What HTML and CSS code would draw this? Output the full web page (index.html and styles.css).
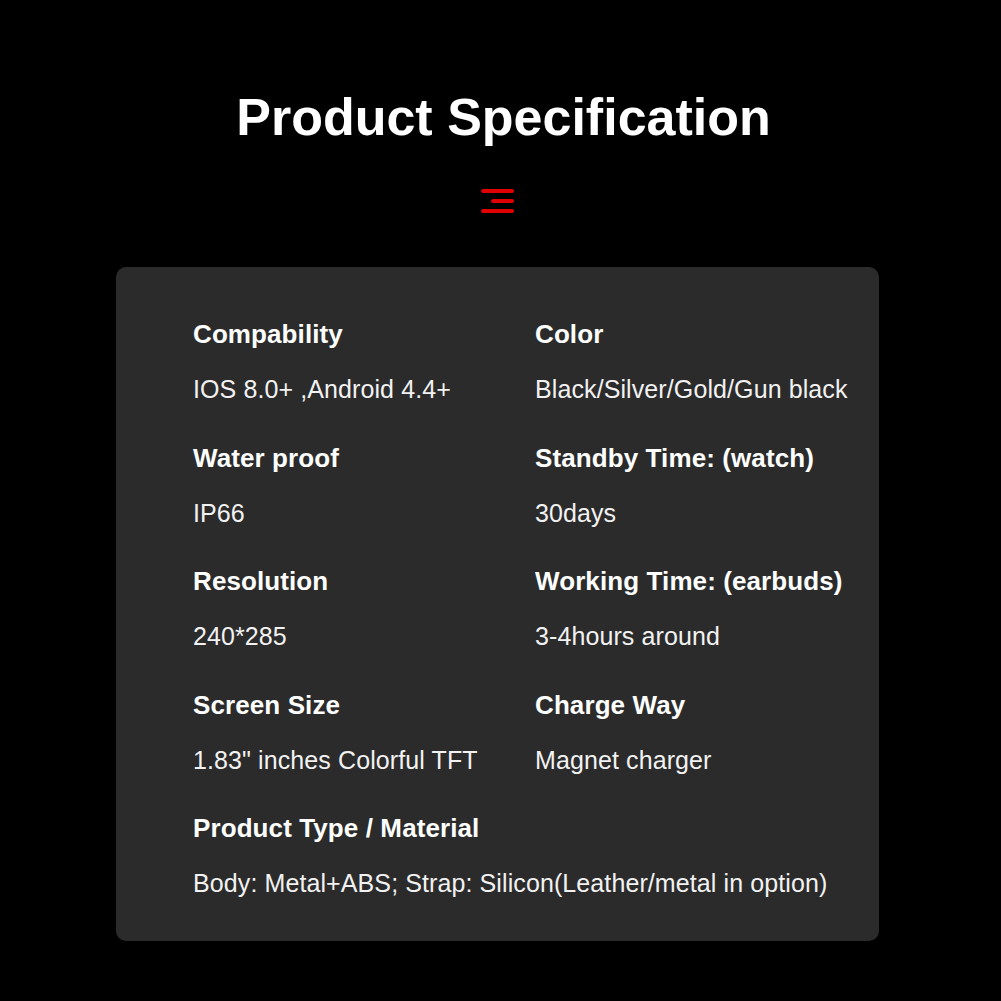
FILE: index.html
```html
<!DOCTYPE html>
<html>
<head>
<meta charset="utf-8">
<link rel="stylesheet" href="styles.css">
</head>
<body>
<div class="page">
  <h1 class="title">Product Specification</h1>
  <div class="icon">
    <svg width="36" height="28" viewBox="0 0 36 28">
      <line x1="3" y1="4" x2="32" y2="4" stroke="#e10000" stroke-width="4" stroke-linecap="round"/>
      <line x1="13" y1="14" x2="32" y2="14" stroke="#e10000" stroke-width="4" stroke-linecap="round"/>
      <line x1="3" y1="24" x2="32" y2="24" stroke="#e10000" stroke-width="4" stroke-linecap="round"/>
    </svg>
  </div>
  <div class="card">
    <div class="spec">
      <div class="label">Compability</div>
      <div class="value">IOS 8.0+ ,Android 4.4+</div>
    </div>
    <div class="spec">
      <div class="label">Color</div>
      <div class="value">Black/Silver/Gold/Gun black</div>
    </div>
    <div class="spec">
      <div class="label">Water proof</div>
      <div class="value">IP66</div>
    </div>
    <div class="spec">
      <div class="label">Standby Time: (watch)</div>
      <div class="value">30days</div>
    </div>
    <div class="spec">
      <div class="label">Resolution</div>
      <div class="value">240*285</div>
    </div>
    <div class="spec">
      <div class="label">Working Time: (earbuds)</div>
      <div class="value">3-4hours around</div>
    </div>
    <div class="spec">
      <div class="label">Screen Size</div>
      <div class="value">1.83" inches Colorful TFT</div>
    </div>
    <div class="spec">
      <div class="label">Charge Way</div>
      <div class="value">Magnet charger</div>
    </div>
    <div class="spec wide">
      <div class="label">Product Type / Material</div>
      <div class="value">Body: Metal+ABS; Strap: Silicon(Leather/metal in option)</div>
    </div>
  </div>
</div>
</body>
</html>
```

FILE: styles.css
```css
html, body {
  margin: 0;
  padding: 0;
  background: #000;
}
.page {
  width: 1001px;
  height: 1001px;
  overflow: hidden;
  font-family: "Liberation Sans", Arial, sans-serif;
  color: #fff;
}
.title {
  margin: 87px 0 0 6px;
  font-size: 52px;
  line-height: 60px;
  font-weight: bold;
  text-align: center;
}
.icon {
  display: flex;
  justify-content: center;
  margin: 40px 0 0 -6px;
  height: 28px;
}
.icon svg {
  display: block;
}
.card {
  margin: 52px 0 0 116px;
  width: 763px;
  box-sizing: border-box;
  background: #2b2b2b;
  border-radius: 10px;
  padding: 52px 0 43px 77px;
  display: grid;
  grid-template-columns: 342px 1fr;
  row-gap: 38.5px;
}
.spec.wide {
  grid-column: 1 / -1;
}
.label {
  font-size: 26px;
  line-height: 30px;
  font-weight: bold;
  letter-spacing: 0.1px;
}
.value {
  margin-top: 25px;
  font-size: 25px;
  line-height: 30px;
  color: #f2f2f2;
  letter-spacing: 0.1px;
}
```
